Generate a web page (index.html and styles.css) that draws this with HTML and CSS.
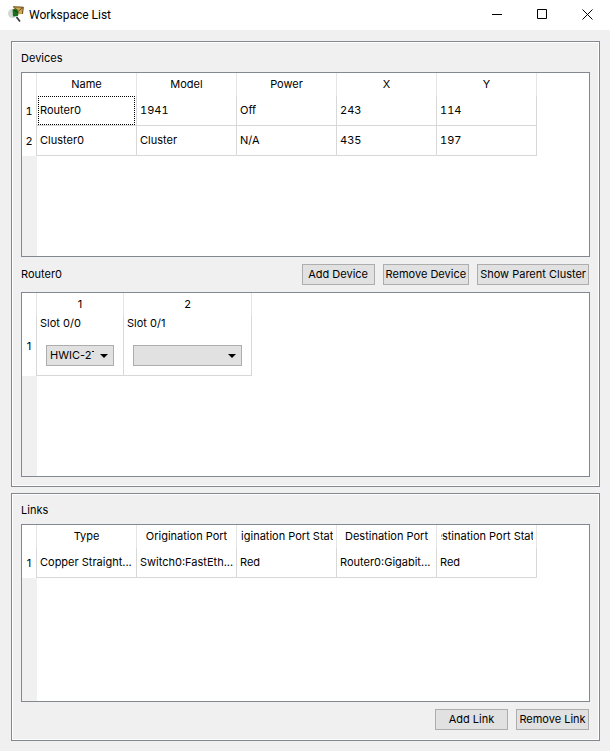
FILE: index.html
```
<!DOCTYPE html>
<html lang="en">
<head>
    <meta charset="UTF-8">
    <meta name="viewport" content="width=device-width, initial-scale=1.0">
    <title>Workspace List</title>
    <link rel="stylesheet" href="styles.css">
</head>
<body>

<header class="titlebar">
    <svg class="app-icon" width="16" height="16" viewBox="0 0 16 16">
        <ellipse cx="4.5" cy="7.5" rx="4.5" ry="4.5" fill="#d3d9d5"/>
        <path d="M5 0.5 L15.5 1 L14.5 8 L9 8.5 Z" fill="#cfa654"/>
        <path d="M5 0.8 L15.3 1.2 L14.5 8" fill="none" stroke="#6b4d1c" stroke-width="1"/>
        <path d="M6 1.5 L10.5 5 L15 1.5" fill="none" stroke="#6b4d1c" stroke-width="0.9"/>
        <path d="M4.5 3.5 L8.5 3 L10.5 6 L10 10 L5 10.5 Z" fill="#17711f"/>
        <path d="M5.5 3.5 L9.5 6.5" stroke="#0a3a10" stroke-width="1"/>
        <path d="M8.5 11 L12 15.5" stroke="#333" stroke-width="1.6"/>
    </svg>
    <h1>Workspace List</h1>
    <div class="window-buttons">
        <button type="button" aria-label="Minimize">
            <svg width="11" height="11" viewBox="0 0 11 11"><path d="M0 5.5h10" stroke="#000"/></svg>
        </button>
        <button type="button" aria-label="Maximize">
            <svg width="11" height="11" viewBox="0 0 11 11"><path d="M.5 .5h9v9h-9z" fill="none" stroke="#000"/></svg>
        </button>
        <button type="button" aria-label="Close">
            <svg width="11" height="11" viewBox="0 0 11 11"><path d="M.5 .5l10 10M10.5 .5l-10 10" stroke="#000"/></svg>
        </button>
    </div>
</header>

<main class="content">
    <section class="group">
        <h2>Devices</h2>
        <div class="view">
            <table class="devices">
                <colgroup><col class="col-index"><col span="5" class="col-data"></colgroup>
                <thead>
                    <tr><td class="corner"></td><th>Name</th><th>Model</th><th>Power</th><th>X</th><th>Y</th></tr>
                </thead>
                <tbody>
                    <tr><th scope="row">1</th><td class="current"><div>Router0</div></td><td>1941</td><td>Off</td><td>243</td><td>114</td></tr>
                    <tr><th scope="row">2</th><td>Cluster0</td><td>Cluster</td><td>N/A</td><td>435</td><td>197</td></tr>
                </tbody>
            </table>
        </div>

        <div class="toolbar">
            <h3>Router0</h3>
            <button type="button">Add Device</button>
            <button type="button">Remove Device</button>
            <button type="button">Show Parent Cluster</button>
        </div>
        <div class="view">
            <table class="slots">
                <colgroup><col class="col-index"><col class="col-slot"><col class="col-slot-wide"></colgroup>
                <thead>
                    <tr><td class="corner"></td><th>1</th><th>2</th></tr>
                </thead>
                <tbody>
                    <tr>
                        <th scope="row">1</th>
                        <td>
                            <label for="slot0">Slot 0/0</label>
                            <select id="slot0"><option>HWIC-2T</option></select>
                        </td>
                        <td>
                            <label for="slot1">Slot 0/1</label>
                            <select id="slot1"><option></option><option>HWIC-2T</option></select>
                        </td>
                    </tr>
                </tbody>
            </table>
        </div>
    </section>

    <section class="group links-group">
        <h2>Links</h2>
        <div class="view">
            <table class="links">
                <colgroup><col class="col-index"><col span="5" class="col-data"></colgroup>
                <thead>
                    <tr>
                        <td class="corner"></td>
                        <th>Type</th>
                        <th>Origination Port</th>
                        <th><div class="clip">Origination Port Status</div></th>
                        <th>Destination Port</th>
                        <th><div class="clip">Destination Port Status</div></th>
                    </tr>
                </thead>
                <tbody>
                    <tr>
                        <th scope="row">1</th>
                        <td>Copper Straight...</td>
                        <td>Switch0:FastEth...</td>
                        <td>Red</td>
                        <td>Router0:Gigabit...</td>
                        <td>Red</td>
                    </tr>
                </tbody>
            </table>
        </div>
        <div class="toolbar">
            <button type="button">Add Link</button>
            <button type="button">Remove Link</button>
        </div>
    </section>
</main>

</body>
</html>
```
FILE: styles.css
```
* {
    box-sizing: border-box;
}
body {
    margin: 0;
    min-height: 100vh;
    display: flex;
    flex-direction: column;
    background-color: #f0f0f0;
    color: #000;
    font-family: Inter, 'Liberation Sans', sans-serif;
    font-size: 11px;
    line-height: 14px;
}
h1, h2, h3 {
    margin: 0;
    font-size: 11px;
    font-weight: normal;
}
.titlebar {
    display: flex;
    align-items: center;
    height: 30px;
    padding-left: 8px;
    background-color: #fff;
}
.titlebar h1 {
    flex: 1;
    margin-left: 5px;
    font-family: Roboto, 'Open Sans', sans-serif;
    font-size: 12px;
}
.app-icon {
    margin-bottom: 2px;
}
.window-buttons {
    display: flex;
    align-self: stretch;
}
.window-buttons button {
    display: flex;
    align-items: center;
    justify-content: center;
    width: 45px;
    padding: 0 0 2px;
    border: none;
    background: none;
}
.window-buttons button:hover {
    background-color: #e5e5e5;
}
.content {
    flex: 1;
    display: flex;
    flex-direction: column;
    gap: 6px;
    padding: 11px 10px 10px 11px;
}
.group {
    flex: 1 0 auto;
    display: flex;
    flex-direction: column;
    padding: 0 9px 9px;
    border: 1px solid #828790;
    box-shadow: inset 1px 1px #fff, inset -1px -1px #fff;
}
.links-group {
    flex-grow: 0;
}
.group h2 {
    padding: 9px 0 7px;
}
.view {
    flex: 1 0 auto;
    min-height: 178px;
    border: 1px solid #828790;
    background: linear-gradient(to right, #f0f0f0 15px, #fff 15px);
    overflow: auto;
}
.toolbar {
    display: flex;
    align-items: center;
    gap: 8px;
    padding: 7px 1px 7px 0;
}
.toolbar h3 {
    margin-right: auto;
    padding-bottom: 1px;
}
.toolbar button {
    min-width: 73px;
    height: 21px;
    padding: 0 2px 1px;
    border: 1px solid #adadad;
    background-color: #e1e1e1;
    color: #000;
    font: inherit;
    white-space: nowrap;
}
.toolbar button:hover {
    border-color: #0078d7;
    background-color: #e5f1fb;
}
.links-group .toolbar {
    justify-content: flex-end;
    padding-bottom: 1px;
}
table {
    table-layout: fixed;
    width: 515px;
    border-collapse: separate;
    border-spacing: 0;
    background-color: #fff;
}
.devices {
    font-variant-numeric: tabular-nums;
}
.slots {
    width: 230px;
}
.col-index {
    width: 15px;
}
.col-data {
    width: 100px;
}
.col-slot {
    width: 87px;
}
.col-slot-wide {
    width: 128px;
}
th, td {
    height: 30px;
    padding: 0 3px 1px;
    border-right: 1px solid #d8d8d8;
    font-weight: normal;
    text-align: left;
    white-space: nowrap;
}
thead th, .corner {
    height: 23px;
    border-right-color: #e5e5e5;
    text-align: center;
}
tbody th {
    padding: 0;
    text-align: center;
}
tbody td {
    border-bottom: 1px solid #d8d8d8;
}
.clip {
    display: flex;
    justify-content: center;
    margin-left: 1px;
    overflow: hidden;
}
.current {
    padding: 0 1px;
}
.current div {
    height: 29px;
    padding-left: 1px;
    border: 1px dotted #000;
    line-height: 27px;
}
.slots tbody td {
    height: 60px;
    vertical-align: top;
}
.slots label {
    display: block;
}
.slots select {
    display: block;
    width: calc(100% - 12px);
    height: 21px;
    margin: 15px 6px 0;
    padding: 0 19px 1px 3px;
    border: 1px solid #adadad;
    border-radius: 0;
    appearance: none;
    background: #e1e1e1 url("data:image/svg+xml,%3Csvg xmlns='http://www.w3.org/2000/svg' width='8' height='4'%3E%3Cpath d='M0 0h8L4 4z'/%3E%3C/svg%3E") no-repeat right 5px center;
    color: #000;
    font: inherit;
}
```
